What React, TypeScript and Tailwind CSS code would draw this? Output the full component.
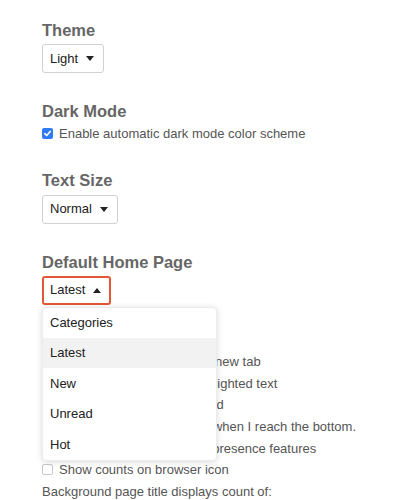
import { useState } from 'react';

const Caret = ({ up = false }: { up?: boolean }) => (
  <svg width="8" height="5" viewBox="0 0 8 5" className="ml-[8px] shrink-0">
    {up ? <polygon points="0,5 8,5 4,0" fill="#222" /> : <polygon points="0,0 8,0 4,5" fill="#222" />}
  </svg>
);

function Select({ label, open = false }: { label: string; open?: boolean }) {
  return (
    <button
      className={`inline-flex items-center h-[29px] rounded-[3px] bg-white text-[13px] text-[#222] ${
        open ? 'border-2 border-[#e45735] pl-[6px] pr-[8px]' : 'border border-[#d1d1d1] pl-[7px] pr-[9px]'
      }`}
    >
      {label}
      <Caret up={open} />
    </button>
  );
}

function Check({ label, checked = false }: { label: string; checked?: boolean }) {
  return (
    <label className="flex items-center h-[21.6px] gap-[6px] text-[13px] text-[#555]">
      {checked ? (
        <span className="w-[11px] h-[11px] rounded-[2px] bg-[#2f7bf5] flex items-center justify-center shrink-0">
          <svg width="9" height="9" viewBox="0 0 9 9">
            <path d="M1.8 4.7 L3.7 6.5 L7.2 2.4" stroke="#fff" strokeWidth="1.6" fill="none" strokeLinecap="round" strokeLinejoin="round" />
          </svg>
        </span>
      ) : (
        <span className="w-[11px] h-[11px] rounded-[2px] border border-[#c9c9c9] bg-white shrink-0" />
      )}
      {label}
    </label>
  );
}

const options = ['Categories', 'Latest', 'New', 'Unread', 'Hot'];

export default function App() {
  const [hover] = useState('Latest');

  return (
    <div
      className="w-[414px] h-[500px] overflow-hidden bg-white pl-[42px] pt-[19px]"
      style={{ fontFamily: '"Liberation Sans", Arial, sans-serif' }}
    >
      <h2 className="text-[16.5px] leading-[22px] font-bold text-[#666]">Theme</h2>
      <div className="mt-[3px]">
        <Select label="Light" />
      </div>

      <h2 className="mt-[27px] text-[16.5px] leading-[22px] font-bold text-[#666]">Dark Mode</h2>
      <div className="mt-[1px]">
        <Check label="Enable automatic dark mode color scheme" checked />
      </div>

      <h2 className="mt-[24px] text-[16.5px] leading-[22px] font-bold text-[#666]">Text Size</h2>
      <div className="mt-[4px]">
        <Select label="Normal" />
      </div>

      <h2 className="mt-[27px] text-[16.5px] leading-[22px] font-bold text-[#666]">Default Home Page</h2>
      <div className="relative mt-[3px] w-fit">
        <Select label="Latest" open />
        {/* Dropdown menu */}
        <div className="absolute left-0 top-full mt-[2px] z-10 w-[175px] bg-white rounded-[4px] shadow-[0_1px_6px_rgba(0,0,0,0.15)] border border-[#ececec] overflow-hidden">
          {options.map((o) => (
            <div
              key={o}
              className={`h-[30.4px] flex items-center px-[7px] text-[13px] text-[#222] ${
                o === hover ? 'bg-[#f2f2f2]' : ''
              }`}
            >
              {o}
            </div>
          ))}
        </div>
      </div>

      <div className="mt-[25px]">
        <Check label="Other" />
        <Check label="Open all external links in a new tab" />
        <Check label="Enable quote reply for highlighted text" />
        <Check label="Enable defer to mark unread" />
        <Check label="Automatically unpin topics when I reach the bottom." />
        <Check label="Hide my public profile and presence features" />
        <Check label="Show counts on browser icon" />
        <div className="h-[21.6px] flex items-center text-[13px] text-[#555]">
          Background page title displays count of:
        </div>
      </div>
    </div>
  );
}
